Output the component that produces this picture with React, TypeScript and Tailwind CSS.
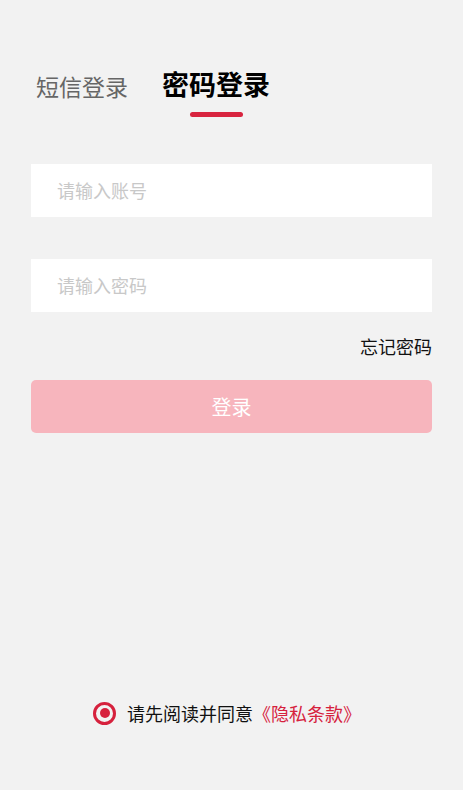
import React from "react";

export default function App() {
  const font = { fontFamily: '"Noto Sans CJK SC", "Noto Sans", sans-serif' };
  return (
    <div className="h-[790px] w-full bg-[#f2f2f2] flex flex-col" style={font}>
      <div className="flex items-start pl-[36px] pt-[64px] gap-[34px]">
        <div className="text-[23px] leading-[40px] mt-[2px] text-[#666666]">短信登录</div>
        <div className="flex flex-col items-center">
          <div className="text-[27px] leading-[40px] font-bold text-black">密码登录</div>
          <div className="mt-[8px] h-[5px] w-[53px] rounded-full bg-[#d8243f]" />
        </div>
      </div>

      <div className="mx-[31px] mt-[47px] flex flex-col">
        <div className="h-[53px] bg-white flex items-center pl-[26px] text-[18px] text-[#c8c8c8]">请输入账号</div>
        <div className="mt-[42px] h-[53px] bg-white flex items-center pl-[26px] text-[18px] text-[#c8c8c8]">请输入密码</div>
        <div className="mt-[22px] flex justify-end text-[18px] leading-[24px] text-[#111111]">忘记密码</div>
        <div className="mt-[22px] h-[53px] rounded-[5px] bg-[#f7b5bd] flex items-center justify-center text-[20px] text-white">登录</div>
      </div>

      <div className="mt-auto mb-[64px] flex items-center pl-[93px] gap-[11px]">
        <div className="w-[23px] h-[23px] rounded-full border-[3px] border-[#d6213d] flex items-center justify-center">
          <div className="w-[10px] h-[10px] rounded-full bg-[#d6213d]" />
        </div>
        <div className="text-[18px] leading-[26px] text-[#111111]">
          请先阅读并同意<span className="text-[#d6213d]">《隐私条款》</span>
        </div>
      </div>
    </div>
  );
}
